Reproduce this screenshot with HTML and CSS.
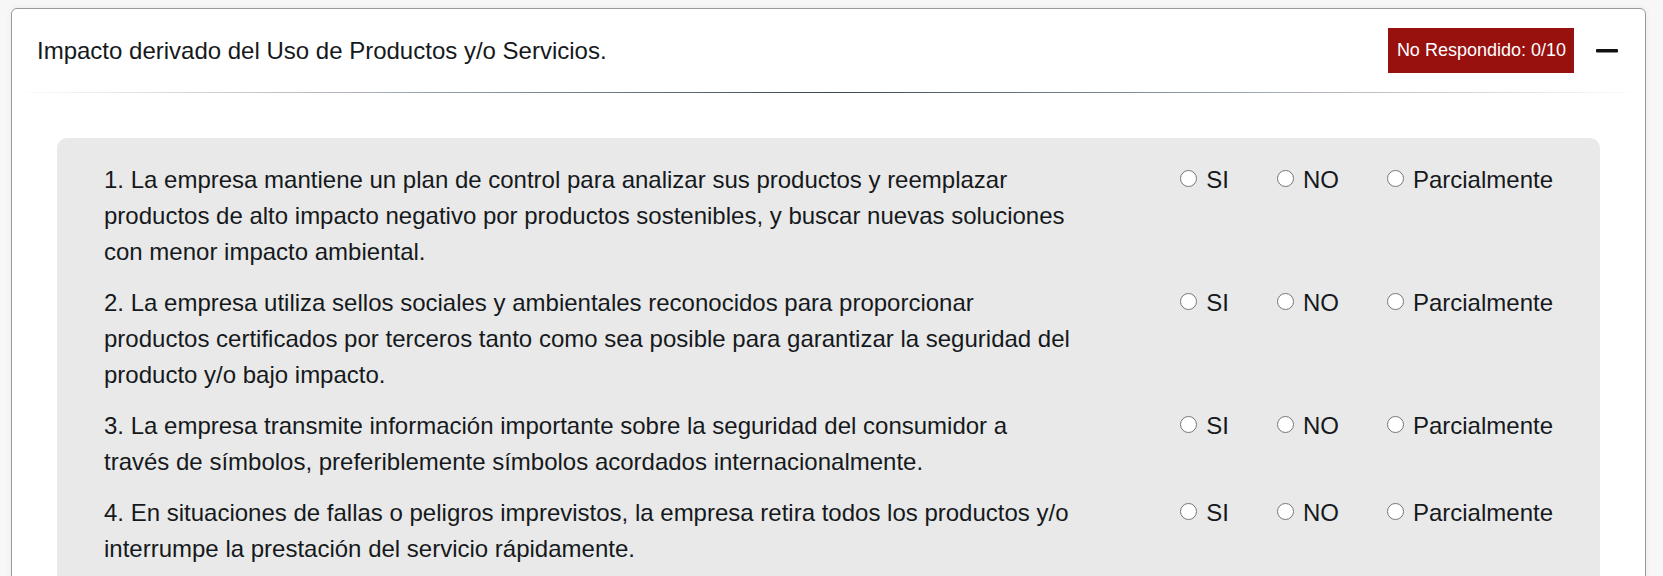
FILE: index.html
```html
<!DOCTYPE html>
<html lang="es">
<head>
<meta charset="utf-8">
<title>Impacto derivado del Uso de Productos y/o Servicios</title>
<link rel="stylesheet" href="styles.css">
</head>
<body>
<div class="page">
  <section class="card">
    <header class="card-header">
      <h2 class="card-title">Impacto derivado del Uso de Productos y/o Servicios.</h2>
      <span class="badge">No Respondido: 0/10</span>
      <button class="toggle" type="button" aria-label="Contraer">
        <svg width="22" height="4" viewBox="0 0 22 4" aria-hidden="true"><rect x="0" y="0" width="22" height="3.5" rx="1" fill="#111"/></svg>
      </button>
    </header>
    <div class="divider"></div>
    <div class="card-body">
      <div class="panel">
        <div class="question">
          <p class="question-text">1. La empresa mantiene un plan de control para analizar sus productos y reemplazar productos de alto impacto negativo por productos sostenibles, y buscar nuevas soluciones con menor impacto ambiental.</p>
          <div class="options">
            <label class="option"><input type="radio" name="q1"><span>SI</span></label>
            <label class="option"><input type="radio" name="q1"><span>NO</span></label>
            <label class="option"><input type="radio" name="q1"><span>Parcialmente</span></label>
          </div>
        </div>
        <div class="question">
          <p class="question-text">2. La empresa utiliza sellos sociales y ambientales reconocidos para proporcionar productos certificados por terceros tanto como sea posible para garantizar la seguridad del producto y/o bajo impacto.</p>
          <div class="options">
            <label class="option"><input type="radio" name="q2"><span>SI</span></label>
            <label class="option"><input type="radio" name="q2"><span>NO</span></label>
            <label class="option"><input type="radio" name="q2"><span>Parcialmente</span></label>
          </div>
        </div>
        <div class="question">
          <p class="question-text">3. La empresa transmite información importante sobre la seguridad del consumidor a través de símbolos, preferiblemente símbolos acordados internacionalmente.</p>
          <div class="options">
            <label class="option"><input type="radio" name="q3"><span>SI</span></label>
            <label class="option"><input type="radio" name="q3"><span>NO</span></label>
            <label class="option"><input type="radio" name="q3"><span>Parcialmente</span></label>
          </div>
        </div>
        <div class="question">
          <p class="question-text">4. En situaciones de fallas o peligros imprevistos, la empresa retira todos los productos y/o interrumpe la prestación del servicio rápidamente.</p>
          <div class="options">
            <label class="option"><input type="radio" name="q4"><span>SI</span></label>
            <label class="option"><input type="radio" name="q4"><span>NO</span></label>
            <label class="option"><input type="radio" name="q4"><span>Parcialmente</span></label>
          </div>
        </div>
      </div>
    </div>
  </section>
</div>
</body>
</html>
```

FILE: styles.css
```css
html, body {
  margin: 0;
  padding: 0;
  overflow: hidden;
  background: #f7f7f7;
  font-family: "Liberation Sans", Arial, sans-serif;
  color: #212529;
}

.page {
  padding: 8px 17px 0 11px;
}

.card {
  background: #fff;
  border: 1px solid #9a9a9a;
  border-radius: 6px;
  box-shadow: 0 0 6px rgba(0, 0, 0, 0.06);
}

.card-header {
  display: flex;
  align-items: center;
  padding: 19px 27px 19px 25px;
}

.card-title {
  flex: 1;
  margin: 0;
  font-size: 24px;
  font-weight: normal;
  line-height: 36px;
  color: #16191c;
}

.badge {
  background: #99110f;
  color: #fff;
  font-size: 18px;
  line-height: 27px;
  padding: 9px 8px 9px 9px;
}

.toggle {
  display: flex;
  align-items: center;
  justify-content: center;
  margin-left: 22px;
  padding: 0;
  border: 0;
  background: none;
  width: 22px;
  height: 24px;
}

.divider {
  height: 1px;
  background: linear-gradient(to right, rgba(44, 62, 80, 0), rgba(44, 62, 80, 0.95), rgba(44, 62, 80, 0));
}

.card-body {
  padding: 45px 45px 0 45px;
}

.panel {
  background: #e9e9e9;
  border-radius: 10px;
  padding: 24px 47px 24px 47px;
  display: flex;
  flex-direction: column;
  gap: 15px;
}

.question {
  display: flex;
  align-items: flex-start;
}

.question-text {
  flex: 0 0 972px;
  margin: 0;
  font-size: 24px;
  line-height: 36px;
  color: #16191c;
}

.options {
  margin-left: auto;
  display: flex;
  gap: 48px;
}

.option {
  display: flex;
  align-items: center;
  gap: 9px;
  font-size: 24px;
  line-height: 36px;
  color: #16191c;
}

.option input {
  appearance: none;
  -webkit-appearance: none;
  width: 17px;
  height: 17px;
  margin: 0 0 3px 0;
  border: 1px solid #767676;
  border-radius: 50%;
  background: #fff;
}
```
